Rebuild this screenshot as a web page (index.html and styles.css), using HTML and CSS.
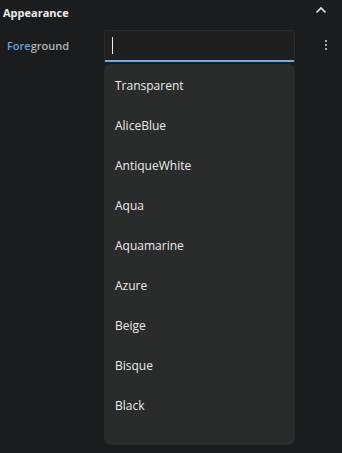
FILE: index.html
```html
<!DOCTYPE html>
<html>
<head>
<meta charset="utf-8">
<link rel="stylesheet" href="styles.css">
</head>
<body>
<div class="panel">
  <div class="header">
    <span class="title">Appearance</span>
    <svg class="chev" width="12" height="8" viewBox="0 0 12 8"><path d="M1.5 6.5 L6 2 L10.5 6.5" fill="none" stroke="#e6e6e6" stroke-width="1.6"/></svg>
  </div>
  <div class="row">
    <span class="label"><span class="hl">Fore</span>ground</span>
    <div class="field">
      <div class="input"><span class="caret"></span></div>
      <ul class="list">
        <li>Transparent</li>
        <li>AliceBlue</li>
        <li>AntiqueWhite</li>
        <li>Aqua</li>
        <li>Aquamarine</li>
        <li>Azure</li>
        <li>Beige</li>
        <li>Bisque</li>
        <li>Black</li>
      </ul>
    </div>
    <div class="kebab"><i></i><i></i><i></i></div>
  </div>
</div>
</body>
</html>
```
FILE: styles.css
```css
html, body { margin: 0; padding: 0; background: #1b1c1e; }
body { width: 342px; height: 453px; overflow: hidden; font-family: "Open Sans", "Noto Sans", sans-serif; color: #e0e0e0; }
.panel { display: flex; flex-direction: column; }
.header { display: flex; align-items: center; justify-content: space-between; height: 24px; padding: 0 15px 0 3px; }
.title { font-size: 11px; font-weight: 700; color: #ececec; }
.chev { display: block; margin-top: -4px; }
.row { display: flex; align-items: flex-start; padding-top: 6px; }
.label { width: 97px; padding-left: 7px; font-size: 11px; font-weight: 600; color: #b4b4b4; line-height: 31px; }
.hl { color: #5fa5dd; }
.field { width: 191px; display: flex; flex-direction: column; gap: 2px; }
.input { height: 29px; background: #1f1f1f; border: 1px solid #2b2b2d; border-bottom: 2px solid #6cb0e6; border-radius: 4px 4px 2px 2px; box-sizing: content-box; position: relative; }
.caret { position: absolute; left: 7px; top: 6px; width: 1px; height: 17px; background: #f0f0f0; }
.list { list-style: none; margin: 0; padding: 2px 0 19px; background: #2a2b2b; border-radius: 7px; }
.list li { height: 40px; line-height: 40px; padding-left: 11px; font-size: 12px; color: #ececec; }
.kebab { margin-left: 30px; margin-top: 10px; display: flex; flex-direction: column; gap: 2px; }
.kebab i { display: block; width: 2px; height: 2px; background: #a8a8a8; }
```
